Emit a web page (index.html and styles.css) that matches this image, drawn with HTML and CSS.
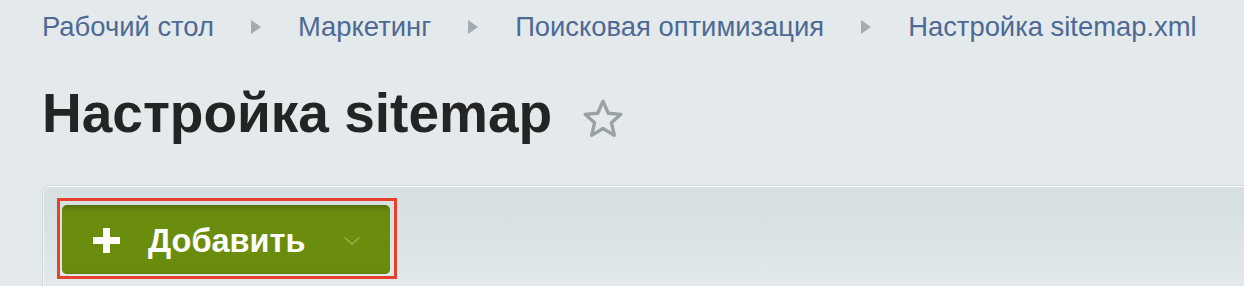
FILE: index.html
```html
<!DOCTYPE html>
<html lang="ru">
<head>
<meta charset="utf-8">
<title>Настройка sitemap</title>
<link rel="stylesheet" href="styles.css">
</head>
<body>
<div class="page">
  <nav class="crumbs">
    <a class="crumb" href="#">Рабочий стол</a>
    <span class="sep"></span>
    <a class="crumb" href="#">Маркетинг</a>
    <span class="sep"></span>
    <a class="crumb" href="#">Поисковая оптимизация</a>
    <span class="sep"></span>
    <a class="crumb" href="#">Настройка sitemap.xml</a>
  </nav>
  <div class="title-row">
    <h1 class="title">Настройка sitemap</h1>
    <svg class="star" viewBox="0 0 40 38" width="42" height="40" aria-hidden="true">
      <path d="M20 3 L25 14.5 L37 15.5 L28 23.5 L30.8 35.5 L20 29 L9.2 35.5 L12 23.5 L3 15.5 L15 14.5 Z" fill="none" stroke="#9aa1a6" stroke-width="3.2" stroke-linejoin="round"/>
    </svg>
  </div>
  <div class="panel">
    <div class="highlight">
      <button class="add-btn" type="button">
        <svg class="plus" viewBox="0 0 27 25" width="27" height="25" aria-hidden="true">
          <rect x="10" y="0" width="7" height="25" fill="#fff"/>
          <rect x="0" y="9" width="27" height="7" fill="#fff"/>
        </svg>
        <span class="add-text">Добавить</span>
        <svg class="chev" viewBox="0 0 18 10" width="18" height="10" aria-hidden="true">
          <path d="M1.5 1.5 L9 8 L16.5 1.5" fill="none" stroke="#93b04c" stroke-width="1.6"/>
        </svg>
      </button>
    </div>
  </div>
</div>
</body>
</html>
```

FILE: styles.css
```css
html, body {
  margin: 0;
  padding: 0;
  background: #e4eaec;
  height: 100%;
  overflow: hidden;
}
.page {
  padding-left: 42px;
  font-family: "Liberation Sans", Arial, sans-serif;
}
.crumbs {
  display: flex;
  align-items: center;
  padding-top: 9px;
  height: 36px;
  font-size: 27.4px;
  line-height: 36px;
  white-space: nowrap;
}
.crumb {
  color: #4d6994;
  text-decoration: none;
}
.sep {
  width: 0;
  height: 0;
  margin: 0 37px;
  border-top: 7px solid transparent;
  border-bottom: 7px solid transparent;
  border-left: 10px solid #a3abb0;
}
.title-row {
  display: flex;
  align-items: center;
  margin-top: 37px;
  height: 62px;
}
.title {
  margin: 0;
  font-size: 55px;
  line-height: 62px;
  font-weight: bold;
  color: #232426;
  white-space: nowrap;
}
.star {
  margin-left: 30px;
  margin-top: 10px;
}
.panel {
  margin-top: 41px;
  border: 1px solid #cdd6d8;
  border-right: none;
  border-bottom: none;
  border-radius: 7px 0 0 0;
  box-shadow: inset 0 1px 0 #ffffff, inset 1px 0 0 #f2f6f7;
  background: linear-gradient(#d6e0e0 0px, #d9e2e3 40px, #e3e9eb 100px);
  height: 88px;
  padding: 12px 0 0 14px;
}
.highlight {
  display: inline-block;
  border: 3px solid #e8402e;
  padding: 4px 4px 2px 2px;
}
.add-btn {
  display: flex;
  align-items: center;
  width: 328px;
  height: 69px;
  padding: 0 0 0 31px;
  border: none;
  border-radius: 5px;
  background: linear-gradient(#52700a 0px, #5f7f0c 3px, #6a8d0e 8px, #6a8c0d 100%);
  box-shadow: inset 0 -1px 0 #5e7e0b;
  cursor: pointer;
  font-family: "Liberation Sans", Arial, sans-serif;
}
.plus {
  flex: none;
  margin-top: 1px;
}
.add-text {
  margin-left: 28px;
  font-size: 32.5px;
  font-weight: bold;
  color: #ffffff;
  line-height: 36px;
  margin-top: 2px;
}
.chev {
  margin-left: 38px;
  margin-top: 2px;
}
```
